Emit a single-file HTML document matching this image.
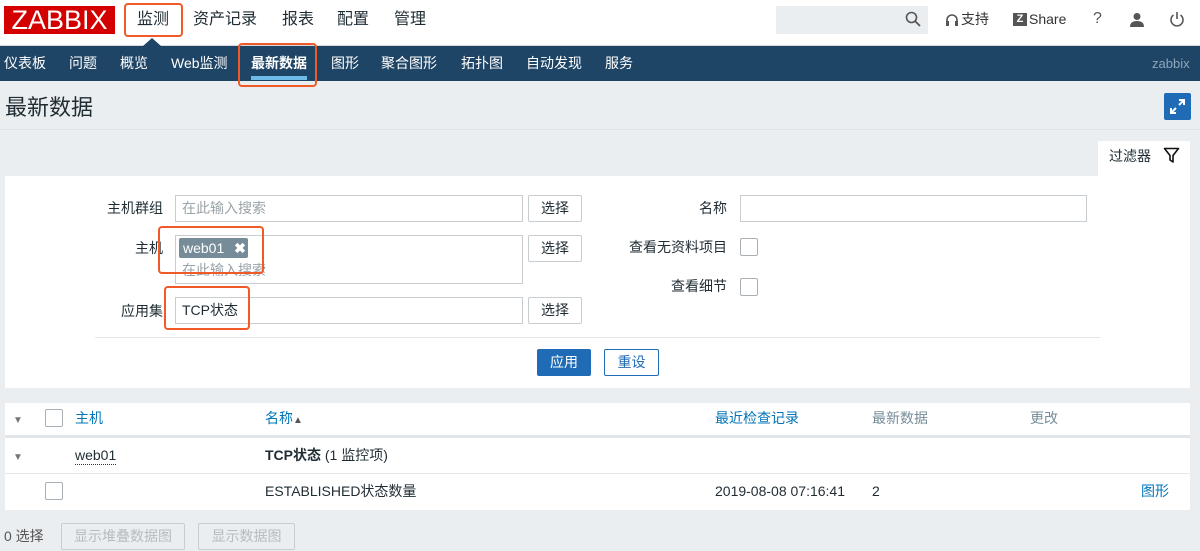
<!DOCTYPE html>
<html><head><meta charset="utf-8"><style>
*{box-sizing:border-box;margin:0;padding:0}
body{width:1200px;height:551px;overflow:hidden;background:#ebeef0;font-family:"Liberation Sans","Noto Sans CJK SC",sans-serif;font-size:14px;line-height:17px;color:#1f2c33;position:relative}
.a{position:absolute}
.top{left:0;top:0;width:1200px;height:46px;background:#fff;border-bottom:1px solid #d6dadd}
.nav{left:0;top:46px;width:1200px;height:35px;background:#1f4566;color:#fff}
.nav span{position:absolute;top:9px;font-size:14px}
.orange{border:2px solid #f05a28;border-radius:4px}
.inp{background:#fff;border:1px solid #c8cdd1;height:27px}
.btn{background:#fff;border:1px solid #c8cdd1;height:27px;text-align:center;line-height:25px;font-size:14px;border-radius:2px}
.lbl{text-align:right;width:120px}
.cb{width:18px;height:18px;border:1px solid #a9b0b5;border-radius:2px;background:#fff}
.blue{color:#0275b8}
.ph{color:#9aa3a8}
</style></head><body>
<div class="a top"></div>
<div class="a" style="left:4px;top:6px;width:111px;height:28px;background:#d40000;color:#fff;font-size:27px;line-height:29px;text-align:center">ZABBIX</div>
<div class="a orange" style="left:124px;top:3px;width:59px;height:34px"></div>
<div class="a" style="left:137px;top:10px;font-size:16px;line-height:19px">监测</div>
<div class="a" style="left:193px;top:10px;font-size:16px;line-height:19px">资产记录</div>
<div class="a" style="left:282px;top:10px;font-size:16px;line-height:19px">报表</div>
<div class="a" style="left:337px;top:10px;font-size:16px;line-height:19px">配置</div>
<div class="a" style="left:394px;top:10px;font-size:16px;line-height:19px">管理</div>
<div class="a" style="left:776px;top:6px;width:152px;height:28px;background:#ebeef0"></div>
<svg class="a" style="left:905px;top:11px" width="16" height="16"><circle cx="6.5" cy="6.5" r="5" fill="none" stroke="#555" stroke-width="1.6"/><line x1="10" y1="10" x2="15" y2="15" stroke="#555" stroke-width="1.8"/></svg>
<svg class="a" style="left:945px;top:13px" width="14" height="14"><path d="M2 9 V7 A5 5 0 0 1 12 7 V9" fill="none" stroke="#555" stroke-width="1.6"/><rect x="1" y="8" width="3" height="5" fill="#555"/><rect x="10" y="8" width="3" height="5" fill="#555"/></svg>
<div class="a" style="left:961px;top:11px;font-size:14px;color:#333">支持</div>
<div class="a" style="left:1013px;top:13px;width:14px;height:13px;background:#555;color:#fff;font-size:11px;font-weight:bold;text-align:center;line-height:13px">Z</div>
<div class="a" style="left:1029px;top:11px;font-size:14px;color:#333">Share</div>
<div class="a" style="left:1093px;top:10px;font-size:16px;color:#555">?</div>
<svg class="a" style="left:1129px;top:12px" width="16" height="16"><circle cx="8" cy="4.5" r="3.5" fill="#555"/><path d="M1 15 Q1 9 8 9 Q15 9 15 15Z" fill="#555"/></svg>
<svg class="a" style="left:1169px;top:11px" width="16" height="16"><path d="M4.5 4 A6 6 0 1 0 11.5 4" fill="none" stroke="#555" stroke-width="1.6"/><line x1="8" y1="1" x2="8" y2="8" stroke="#555" stroke-width="1.6"/></svg>
<div class="a" style="left:143px;top:38px;width:0;height:0;border-left:9px solid transparent;border-right:9px solid transparent;border-bottom:8px solid #1f4566"></div>
<div class="a nav">
<span style="left:4px">仪表板</span><span style="left:69px">问题</span><span style="left:120px">概览</span><span style="left:171px">Web监测</span><span style="left:251px;font-weight:bold">最新数据</span><span style="left:331px">图形</span><span style="left:381px">聚合图形</span><span style="left:461px">拓扑图</span><span style="left:526px">自动发现</span><span style="left:605px">服务</span><span style="left:1152px;color:#8fa6b8;font-size:13px">zabbix</span>
<div class="a" style="left:251px;top:30px;width:56px;height:4px;background:#6ebde8"></div>
</div>
<div class="a orange" style="left:238px;top:43px;width:79px;height:44px"></div>
<div class="a" style="left:5px;top:95px;font-size:22px;line-height:26px">最新数据</div>
<div class="a" style="left:1164px;top:93px;width:27px;height:27px;background:#1f6bb5;border-radius:2px"></div>
<svg class="a" style="left:1164px;top:93px" width="27" height="27"><path d="M15 7H20V12M20 7L15 12M7 15V20H12M7 20L12 15" fill="none" stroke="#fff" stroke-width="2"/></svg>
<div class="a" style="left:0;top:129px;width:1200px;height:1px;background:#dfe3e6"></div>
<div class="a" style="left:1098px;top:141px;width:92px;height:36px;background:#fff;border-radius:2px 2px 0 0"></div>
<div class="a" style="left:1109px;top:148px;font-size:14px">过滤器</div>
<svg class="a" style="left:1163px;top:147px" width="17" height="17"><path d="M1.5 1.5H15.5L10 8.5V15L7 13V8.5Z" fill="none" stroke="#111" stroke-width="1.6" stroke-linejoin="round"/></svg>
<div class="a" style="left:5px;top:176px;width:1185px;height:212px;background:#fff"></div>
<div class="a lbl" style="left:43px;top:200px">主机群组</div>
<div class="a inp" style="left:175px;top:195px;width:348px"></div>
<div class="a ph" style="left:182px;top:200px">在此输入搜索</div>
<div class="a btn" style="left:528px;top:195px;width:54px">选择</div>
<div class="a lbl" style="left:43px;top:240px">主机</div>
<div class="a inp" style="left:175px;top:235px;width:348px;height:49px"></div>
<div class="a" style="left:179px;top:238px;width:69px;height:20px;background:#768d99;border-radius:2px;color:#fff;padding-left:4px;line-height:20px">web01 <b style="margin-left:6px">✖</b></div>
<div class="a ph" style="left:182px;top:262px">在此输入搜索</div>
<div class="a btn" style="left:528px;top:235px;width:54px">选择</div>
<div class="a orange" style="left:158px;top:226px;width:106px;height:48px"></div>
<div class="a lbl" style="left:43px;top:303px">应用集</div>
<div class="a inp" style="left:175px;top:297px;width:348px"></div>
<div class="a" style="left:182px;top:302px">TCP状态</div>
<div class="a btn" style="left:528px;top:297px;width:54px">选择</div>
<div class="a orange" style="left:164px;top:286px;width:86px;height:44px"></div>
<div class="a lbl" style="left:607px;top:200px">名称</div>
<div class="a inp" style="left:740px;top:195px;width:347px"></div>
<div class="a lbl" style="left:607px;top:239px">查看无资料项目</div>
<div class="a cb" style="left:740px;top:238px"></div>
<div class="a lbl" style="left:607px;top:278px">查看细节</div>
<div class="a cb" style="left:740px;top:278px"></div>
<div class="a" style="left:95px;top:337px;width:1005px;height:1px;background:#e3e6e8"></div>
<div class="a btn" style="left:537px;top:349px;width:54px;background:#1f6bb5;color:#fff;border-color:#1f6bb5">应用</div>
<div class="a btn" style="left:604px;top:349px;width:55px;border-color:#1f6bb5;color:#1f6bb5">重设</div>
<div class="a" style="left:5px;top:403px;width:1185px;height:107px;background:#fff"></div>
<div class="a" style="left:5px;top:435px;width:1185px;height:3px;background:#e3e6e8"></div>
<div class="a" style="left:5px;top:473px;width:1185px;height:1px;background:#e6e9eb"></div>
<div class="a" style="left:13px;top:412px;font-size:10px;color:#777">▼</div>
<div class="a cb" style="left:45px;top:409px"></div>
<div class="a blue" style="left:75px;top:410px">主机</div>
<div class="a blue" style="left:265px;top:410px">名称<span style="font-size:10px;color:#555">▲</span></div>
<div class="a blue" style="left:715px;top:410px">最近检查记录</div>
<div class="a" style="left:872px;top:410px;color:#768d99">最新数据</div>
<div class="a" style="left:1030px;top:410px;color:#768d99">更改</div>
<div class="a" style="left:13px;top:449px;font-size:10px;color:#777">▼</div>
<div class="a" style="left:75px;top:447px;border-bottom:1px dotted #333">web01</div>
<div class="a" style="left:265px;top:447px"><b>TCP状态</b> (1 监控项)</div>
<div class="a cb" style="left:45px;top:482px"></div>
<div class="a" style="left:265px;top:483px">ESTABLISHED状态数量</div>
<div class="a" style="left:715px;top:483px">2019-08-08 07:16:41</div>
<div class="a" style="left:872px;top:483px">2</div>
<div class="a blue" style="left:1141px;top:483px">图形</div>
<div class="a" style="left:4px;top:528px;color:#555">0 选择</div>
<div class="a btn" style="left:61px;top:523px;width:124px;color:#b5bcc0;background:#ebeef0">显示堆叠数据图</div>
<div class="a btn" style="left:198px;top:523px;width:97px;color:#b5bcc0;background:#ebeef0">显示数据图</div>
</body></html>
